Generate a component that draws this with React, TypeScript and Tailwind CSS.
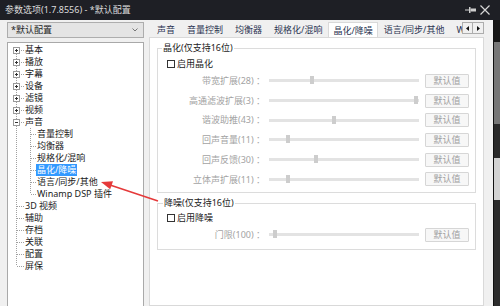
import React from "react";

type TreeItem = {
  text: string;
  level: 0 | 1;
  exp?: "+" | "-";
  selected?: boolean;
  last?: boolean;
};

const tree: TreeItem[] = [
  { text: "基本", level: 0, exp: "+" },
  { text: "播放", level: 0, exp: "+" },
  { text: "字幕", level: 0, exp: "+" },
  { text: "设备", level: 0, exp: "+" },
  { text: "滤镜", level: 0, exp: "+" },
  { text: "视频", level: 0, exp: "+" },
  { text: "声音", level: 0, exp: "-" },
  { text: "音量控制", level: 1 },
  { text: "均衡器", level: 1 },
  { text: "规格化/混响", level: 1 },
  { text: "晶化/降噪", level: 1, selected: true },
  { text: "语言/同步/其他", level: 1 },
  { text: "Winamp DSP 插件", level: 1, last: true },
  { text: "3D 视频", level: 0 },
  { text: "辅助", level: 0 },
  { text: "存档", level: 0 },
  { text: "关联", level: 0 },
  { text: "配置", level: 0 },
  { text: "屏保", level: 0, last: true },
];

const tabs = ["声音", "音量控制", "均衡器", "规格化/混响", "晶化/降噪", "语言/同步/其他", "Winamp DSP 插件"];

const crystal = [
  { label: "带宽扩展(28)", pos: 43 },
  { label: "高通滤波扩展(3)", pos: 147 },
  { label: "谐波助推(43)", pos: 65 },
  { label: "回声音量(11)", pos: 19 },
  { label: "回声反馈(30)", pos: 47 },
  { label: "立体声扩展(11)", pos: 19 },
];

const dot = { stroke: "#a0a0a0", strokeDasharray: "1 1", shapeRendering: "crispEdges" as const };

function TreeRow({ item, first }: { item: TreeItem; first: boolean }) {
  const lv0End = item.level === 0 && item.last ? 6 : 12;
  return (
    <div className="flex h-[12px] items-center">
      {item.level === 0 ? (
        <svg width="16" height="12" className="shrink-0">
          <line x1="8.5" y1={first ? 6 : 0} x2="8.5" y2={lv0End} {...dot} />
          <line x1="9" y1="6.5" x2="16" y2="6.5" {...dot} />
          {item.exp ? (
            <g shapeRendering="crispEdges">
              <rect x="5.5" y="3.5" width="6" height="6" fill="#fff" stroke="#9a9a9a" />
              <line x1="7" y1="6.5" x2="10" y2="6.5" stroke="#333" />
              {item.exp === "+" ? <line x1="8.5" y1="5" x2="8.5" y2="8" stroke="#333" /> : null}
            </g>
          ) : null}
        </svg>
      ) : (
        <svg width="28" height="12" className="shrink-0">
          <line x1="8.5" y1="0" x2="8.5" y2="12" {...dot} />
          <line x1="22.5" y1="0" x2="22.5" y2={item.last ? 6 : 12} {...dot} />
          <line x1="23" y1="6.5" x2="28" y2="6.5" {...dot} />
        </svg>
      )}
      <span
        className={
          item.selected
            ? "ml-[0px] bg-[#3399ff] px-[1px] leading-[12px] text-white"
            : "ml-[1px] leading-[12px] text-[#1b1b1b]"
        }
      >
        {item.text}
      </span>
    </div>
  );
}

function SliderRow({ label, pos }: { label: string; pos: number }) {
  return (
    <div className="flex h-[19.7px] items-center">
      <span className="w-[107px] shrink-0 whitespace-nowrap text-right text-[#a3a3a3]">{label} ：</span>
      <div className="relative ml-[4px] h-[3px] w-[150px] shrink-0 bg-[#e3e3e3]">
        <div
          className="absolute top-[-3px] h-[8px] w-[4px] bg-[#cdcdcd]"
          style={{ left: pos - 2 }}
        />
      </div>
      <button className="ml-[6px] flex h-[14px] w-[44px] shrink-0 items-center justify-center rounded-[1px] border border-[#d6d6d6] bg-[#f7f7f7] leading-[12px] text-[#a0a0a0]">
        默认值
      </button>
    </div>
  );
}

function Check({ label }: { label: string }) {
  return (
    <div className="flex h-[14px] items-center pl-[9px]">
      <span className="h-[8px] w-[8px] border border-[#333] bg-white" />
      <span className="ml-[2px] leading-[12px] text-[#1b1b1b]">{label}</span>
    </div>
  );
}

export default function App() {
  return (
    <div className="relative flex h-[306px] w-[500px] flex-col overflow-hidden bg-[#f0f0f0] font-['Noto_Sans','Noto_Sans_CJK_SC',sans-serif] text-[9px]">
      {/* title bar */}
      <div className="flex h-[20px] shrink-0 items-center bg-[#1e1f25] pl-[5px] pr-[10px] text-[#dcdcdc]">
        <span className="leading-[12px]">参数选项(1.7.8556) - *默认配置</span>
        <div className="ml-auto flex items-center gap-[4px]">
          <svg width="11" height="8" viewBox="0 0 11 8">
            <line x1="0" y1="4" x2="4" y2="4" stroke="#cfcfcf" />
            <rect x="4" y="1" width="1.5" height="6" fill="#cfcfcf" />
            <rect x="5.5" y="2.5" width="5.5" height="3" fill="#cfcfcf" />
          </svg>
          <svg width="10" height="10" viewBox="0 0 10 10">
            <path d="M0.5 0.5 L9.5 9.5 M9.5 0.5 L0.5 9.5" stroke="#d6d6d6" strokeWidth="1.2" />
          </svg>
        </div>
      </div>

      <div className="flex min-h-0 flex-1">
        <div className="flex w-[493px] shrink-0 pl-[7px] pr-[9px] pt-[2px]">
          {/* left column */}
          <div className="flex w-[137px] shrink-0 flex-col">
            <div className="flex h-[16px] items-center border border-[#adadad] bg-[#e4e4e4] pl-[3px] pr-[5px] text-[#1b1b1b]">
              <span className="leading-[12px]">*默认配置</span>
              <svg width="6" height="4" viewBox="0 0 6 4" className="ml-auto">
                <path d="M0.5 0.5 L3 3 L5.5 0.5" fill="none" stroke="#777" />
              </svg>
            </div>
            <div className="mt-[4px] flex-1 border-x border-t border-[#a9a9a9] bg-white pt-[1px]">
              {tree.map((item, i) => (
                <TreeRow key={item.text} item={item} first={i === 0} />
              ))}
            </div>
          </div>

          {/* right column */}
          <div className="ml-[5px] flex w-[335px] shrink-0 flex-col">
            <div className="flex h-[15px] shrink-0 items-end">
              <div className="flex min-w-0 flex-1 items-end overflow-hidden pl-[2px]">
                {tabs.map((t) =>
                  t === "晶化/降噪" ? (
                    <div
                      key={t}
                      className="relative z-10 -mb-px flex h-[16px] shrink-0 items-center border-x border-t border-[#d9d9d9] bg-white px-[4px] leading-[12px] text-[#2b3552]"
                    >
                      {t}
                    </div>
                  ) : (
                    <div
                      key={t}
                      className="flex h-[15px] shrink-0 items-center whitespace-nowrap px-[6px] leading-[12px] text-[#2b3552]"
                    >
                      {t}
                    </div>
                  ),
                )}
              </div>
              <div className="mb-[3px] flex h-[12px] shrink-0">
                <div className="flex w-[11px] items-center justify-center border border-[#adadad] bg-[#f0f0f0]">
                  <svg width="3" height="5" viewBox="0 0 3 5">
                    <path d="M3 0 L0 2.5 L3 5 Z" fill="#111" />
                  </svg>
                </div>
                <div className="-ml-px flex w-[12px] items-center justify-center border border-[#adadad] bg-[#f0f0f0]">
                  <svg width="3" height="5" viewBox="0 0 3 5">
                    <path d="M0 0 L3 2.5 L0 5 Z" fill="#111" />
                  </svg>
                </div>
              </div>
            </div>

            <div className="flex-1 border border-[#d9d9d9] bg-white px-[7px] pt-[4px]">
              <fieldset className="border border-[#dcdcdc] pb-[3px]">
                <legend className="ml-[4px] px-[1px] leading-[12px] text-[#1b1b1b]">晶化(仅支持16位)</legend>
                <div className="mt-[3px]">
                  <Check label="启用晶化" />
                </div>
                {crystal.map((r) => (
                  <SliderRow key={r.label} label={r.label} pos={r.pos} />
                ))}
              </fieldset>

              <fieldset className="mt-[4px] border border-[#dcdcdc] pb-[4px]">
                <legend className="ml-[5px] px-[1px] leading-[12px] text-[#1b1b1b]">降噪(仅支持16位)</legend>
                <div className="mt-[2px]">
                  <Check label="启用降噪" />
                </div>
                <SliderRow label="门限(100)" pos={6} />
              </fieldset>
            </div>
          </div>
        </div>

        {/* window behind */}
        <div className="flex w-[7px] shrink-0 flex-col border-l border-[#111] bg-[#222]">
          <div className="h-[22px] bg-[#161616]" />
          <div className="h-[82px] bg-[#777]" />
          <div className="h-[34px] bg-[#2a2a2a]" />
          <div className="h-[42px] bg-[#d2d2d2]" />
          <div className="flex-1 bg-[#2c2c2c]" />
        </div>
      </div>

      {/* annotation arrow */}
      <svg className="pointer-events-none absolute left-0 top-0" width="500" height="306">
        <line x1="158" y1="201" x2="110" y2="185" stroke="#e5393a" strokeWidth="1.4" />
        <polygon points="101,182 110.2,189.3 113,181.2" fill="#e5393a" />
      </svg>
    </div>
  );
}
